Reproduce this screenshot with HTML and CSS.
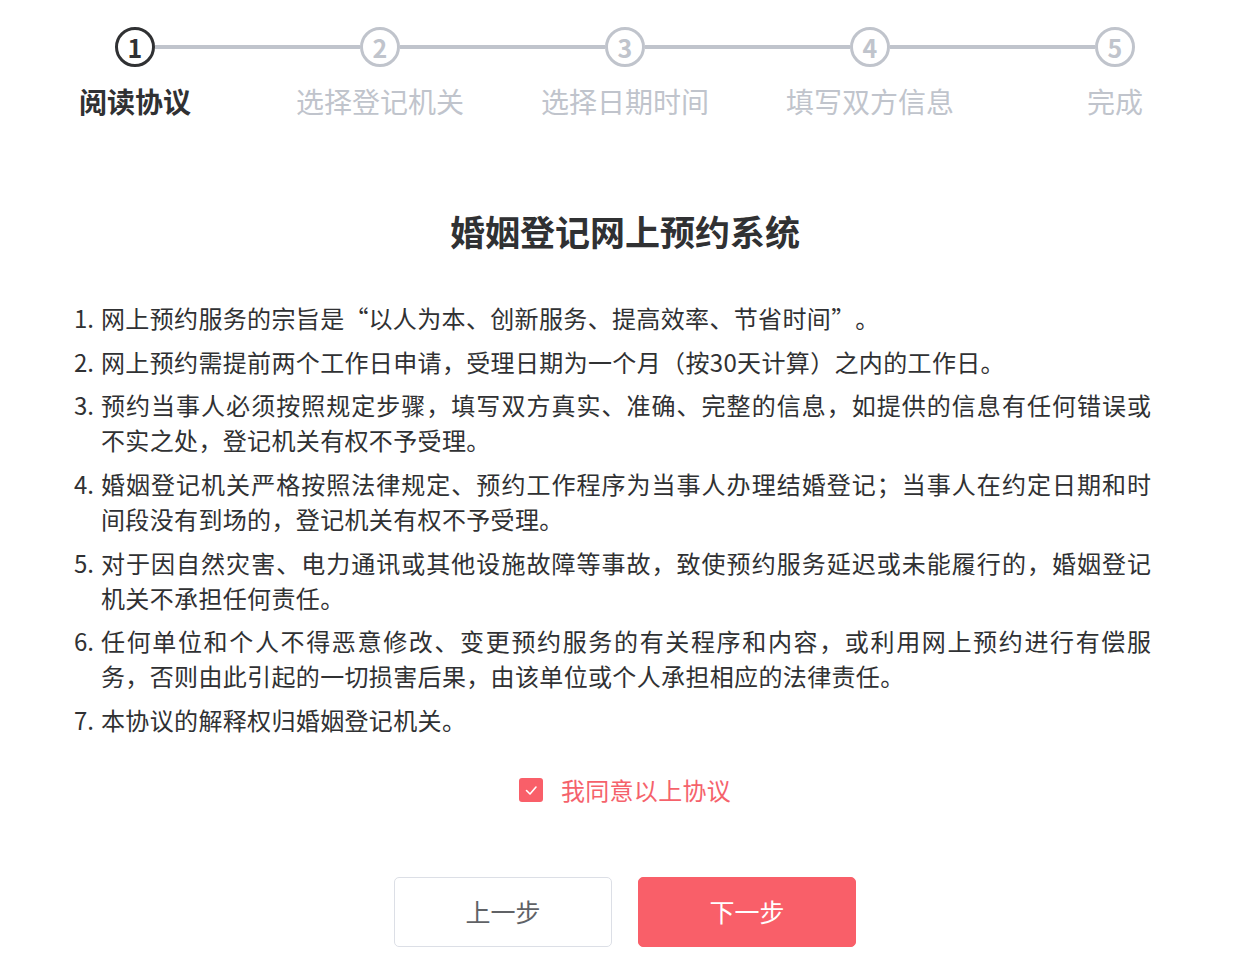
FILE: index.html
```html
<!DOCTYPE html>
<html lang="zh-CN">
<head>
<meta charset="utf-8">
<title>婚姻登记网上预约系统</title>
<link rel="stylesheet" href="styles.css">
</head>
<body>
<div class="page">
  <div class="steps">
    <div class="step active first">
      <div class="step-head"><span class="bar"></span><span class="circle">1</span><span class="bar"></span></div>
      <div class="step-title">阅读协议</div>
    </div>
    <div class="step">
      <div class="step-head"><span class="bar"></span><span class="circle">2</span><span class="bar"></span></div>
      <div class="step-title">选择登记机关</div>
    </div>
    <div class="step">
      <div class="step-head"><span class="bar"></span><span class="circle">3</span><span class="bar"></span></div>
      <div class="step-title">选择日期时间</div>
    </div>
    <div class="step">
      <div class="step-head"><span class="bar"></span><span class="circle">4</span><span class="bar"></span></div>
      <div class="step-title">填写双方信息</div>
    </div>
    <div class="step last">
      <div class="step-head"><span class="bar"></span><span class="circle">5</span><span class="bar"></span></div>
      <div class="step-title">完成</div>
    </div>
  </div>

  <h1 class="title">婚姻登记网上预约系统</h1>

  <ol class="rules">
    <li><span class="num">1.</span><div class="txt"><span class="row">网上预约服务的宗旨是<span class="q q-open">“</span>以人为本、创新服务、提高效率、节省时间<span class="q q-close">”</span>。</span></div></li>
    <li><span class="num">2.</span><div class="txt"><span class="row">网上预约需提前两个工作日申请，受理日期为一个月（按30天计算）之内的工作日。</span></div></li>
    <li><span class="num">3.</span><div class="txt"><span class="row full">预约当事人必须按照规定步骤，填写双方真实、准确、完整的信息，如提供的信息有任何错误或</span><span class="row">不实之处，登记机关有权不予受理。</span></div></li>
    <li><span class="num">4.</span><div class="txt"><span class="row full">婚姻登记机关严格按照法律规定、预约工作程序为当事人办理结婚登记；当事人在约定日期和时</span><span class="row">间段没有到场的，登记机关有权不予受理。</span></div></li>
    <li><span class="num">5.</span><div class="txt"><span class="row full">对于因自然灾害、电力通讯或其他设施故障等事故，致使预约服务延迟或未能履行的，婚姻登记</span><span class="row">机关不承担任何责任。</span></div></li>
    <li><span class="num">6.</span><div class="txt"><span class="row full">任何单位和个人不得恶意修改、变更预约服务的有关程序和内容，或利用网上预约进行有偿服</span><span class="row">务，否则由此引起的一切损害后果，由该单位或个人承担相应的法律责任。</span></div></li>
    <li><span class="num">7.</span><div class="txt"><span class="row">本协议的解释权归婚姻登记机关。</span></div></li>
  </ol>

  <div class="agree">
    <label class="check">
      <span class="box"><svg width="24" height="24" viewBox="0 0 24 24"><polyline points="7.5,12.5 11,16 17,9" fill="none" stroke="#fff" stroke-width="1.6" stroke-linecap="round" stroke-linejoin="round"/></svg></span>
      <span class="check-label">我同意以上协议</span>
    </label>
  </div>

  <div class="actions">
    <button class="btn btn-default">上一步</button>
    <button class="btn btn-primary">下一步</button>
  </div>
</div>
</body>
</html>
```

FILE: styles.css
```css
* { box-sizing: border-box; }

html, body {
  margin: 0;
  padding: 0;
  background: #fff;
}

body {
  font-family: "Noto Sans CJK SC", "Noto Sans", sans-serif;
  color: #303133;
}

.page {
  width: 1250px;
}

/* steps */
.steps {
  display: grid;
  grid-template-columns: repeat(5, 245px);
  padding: 27px 12.5px 0;
}

.step {
  display: flex;
  flex-direction: column;
  align-items: center;
}

.step-head {
  display: flex;
  align-items: center;
  width: 100%;
  height: 40px;
}

.bar {
  flex: 1;
  height: 4px;
  margin-top: -1px;
  background: #c0c4cc;
}

.step.first .bar:first-child,
.step.last .bar:last-child {
  visibility: hidden;
}

.circle {
  width: 40px;
  height: 40px;
  flex: none;
  border: 3px solid #c0c4cc;
  border-radius: 50%;
  display: flex;
  align-items: center;
  justify-content: center;
  font-size: 25px;
  font-weight: 700;
  line-height: 1;
  color: #c0c4cc;
}

.step.active .circle {
  border-color: #303133;
  color: #303133;
}

.step-title {
  margin-top: 14px;
  font-size: 28px;
  line-height: 40px;
  color: #c0c4cc;
  white-space: nowrap;
}

.step.active .step-title {
  color: #303133;
  font-weight: 700;
}

/* title */
.title {
  margin: 85px 0 0;
  text-align: center;
  font-size: 35px;
  line-height: 50px;
  font-weight: 700;
  color: #303133;
}

/* rules */
.rules {
  list-style: none;
  margin: 44px 0 0;
  padding: 0 0 0 74px;
  width: 1151px;
  font-size: 24px;
  line-height: 35px;
  letter-spacing: 0.35px;
  color: #303133;
}

.rules li {
  display: flex;
  margin-bottom: 8.7px;
}

.rules li:last-child {
  margin-bottom: 0;
}

.num {
  width: 27px;
  flex: none;
  letter-spacing: 0;
}

.txt {
  flex: 1;
  min-width: 0;
}

.row {
  display: block;
  white-space: nowrap;
}

.row.full {
  text-align: justify;
  text-align-last: justify;
  white-space: normal;
  letter-spacing: 0;
}

.q {
  display: inline-block;
  width: 24px;
}

.q-open {
  text-align: right;
}

.q-close {
  text-align: left;
}

/* agree */
.agree {
  margin-top: 35px;
  display: flex;
  justify-content: center;
}

.check {
  display: inline-flex;
  align-items: center;
  gap: 18px;
  cursor: pointer;
}

.box {
  width: 24px;
  height: 24px;
  border-radius: 3px;
  background: #f95f69;
  display: block;
}

.box svg {
  display: block;
}

.check-label {
  font-size: 24px;
  line-height: 35px;
  letter-spacing: 0.3px;
  color: #f5626b;
}

/* buttons */
.actions {
  margin-top: 70px;
  display: flex;
  justify-content: center;
  gap: 26px;
}

.btn {
  width: 218px;
  height: 70px;
  border-radius: 5px;
  font-family: "Noto Sans CJK SC", "Noto Sans", sans-serif;
  font-size: 25px;
  padding: 0 0 2px;
  cursor: pointer;
}

.btn-default {
  background: #fff;
  border: 1px solid #dcdfe6;
  color: #606266;
}

.btn-primary {
  background: #f95f69;
  border: 1px solid #f95f69;
  color: #fff;
}
```
